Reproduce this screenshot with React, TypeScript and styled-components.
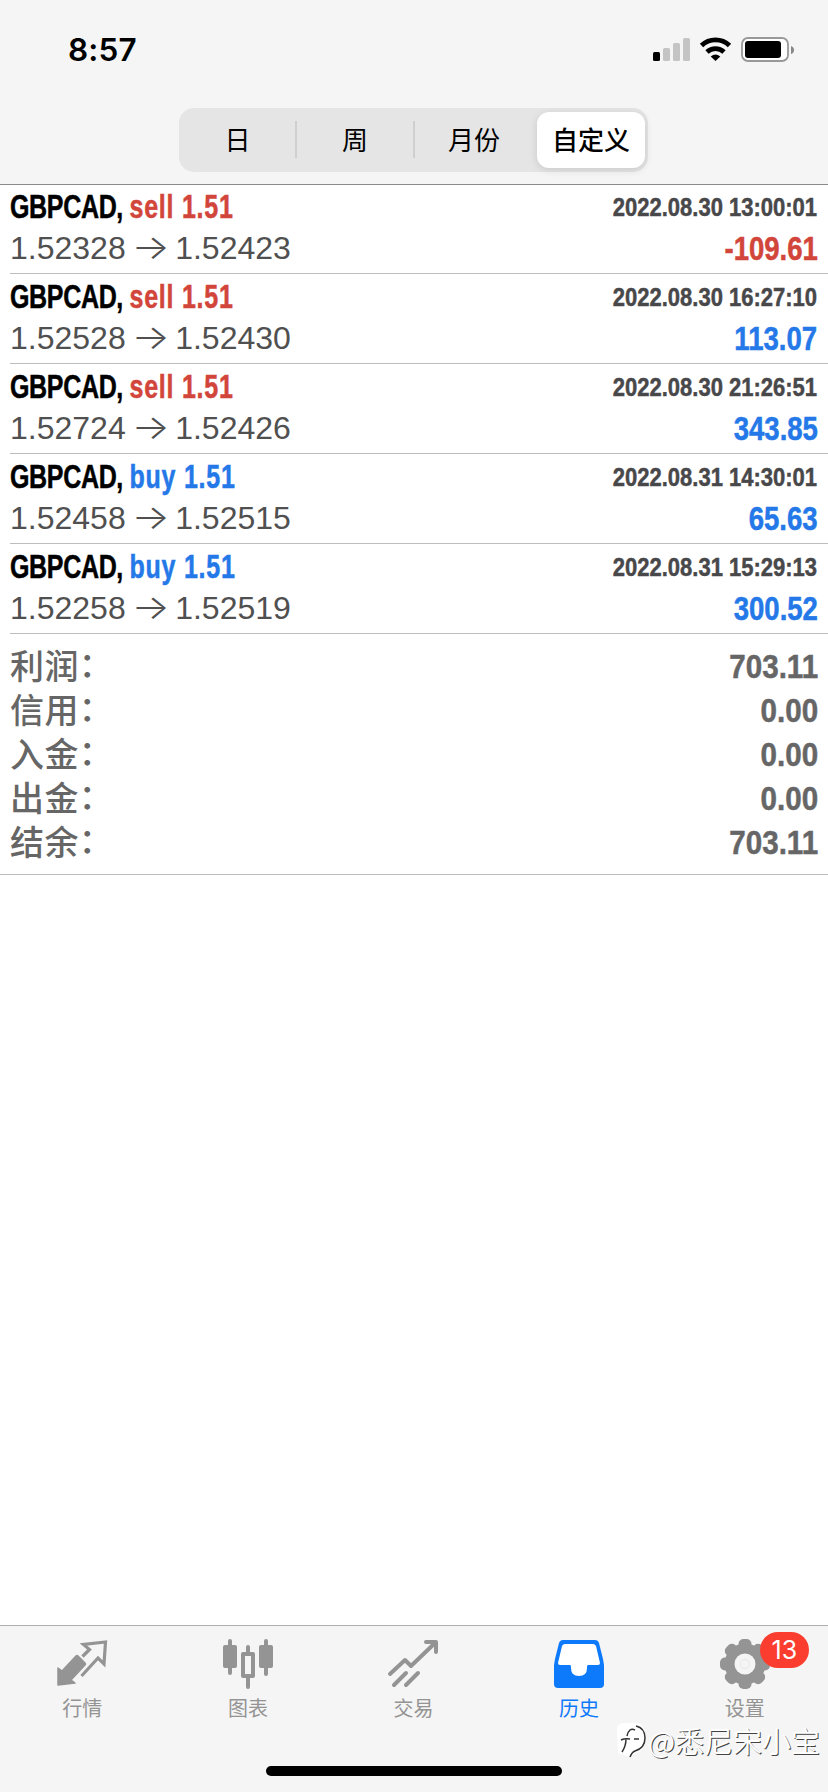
import React from 'react';
import styled, { createGlobalStyle } from 'styled-components';

const RED = '#d2453a';
const BLUE = '#2478e8';

const GlobalStyle = createGlobalStyle`
  * { box-sizing: border-box; }
  html, body { margin: 0; padding: 0; background: #fff; }
  body { font-family: 'Liberation Sans', 'Noto Sans CJK SC', sans-serif; }
`;

const Screen = styled.div`
  position: relative;
  display: flex;
  flex-direction: column;
  width: 828px;
  height: 1792px;
  overflow: hidden;
  background: #fff;
`;

const Header = styled.header`
  height: 185px;
  flex: none;
  background: #f5f5f5;
  border-bottom: 1px solid #8a8a8a;
`;

const StatusBar = styled.div`
  display: flex;
  justify-content: space-between;
  height: 108px;
  padding: 31px 33px 0 68px;
`;

const Clock = styled.div`
  font: 600 31.5px/38px Inter, sans-serif;
  letter-spacing: 0.2px;
  color: #000;
`;

const StatusIcons = styled.svg`
  width: 142px;
  height: 30px;
  margin-top: 4px;
`;

const Segments = styled.div`
  display: flex;
  align-items: stretch;
  width: 469px;
  height: 64px;
  margin-left: 179px;
  padding: 4px 3px 4px 0;
  border-radius: 15px;
  background: #e5e5e5;
`;

const Segment = styled.button<{ $w: number; $active?: boolean; $divider?: boolean }>`
  position: relative;
  width: ${(p) => p.$w}px;
  flex: none;
  margin: 0 0 0 ${(p) => (p.$active ? 3 : 0)}px;
  padding: 0 0 3px;
  border: 0;
  border-radius: 12px;
  background: ${(p) => (p.$active ? '#fff' : 'transparent')};
  box-shadow: ${(p) => (p.$active ? '0 2px 8px rgba(0,0,0,.12)' : 'none')};
  font: ${(p) => (p.$active ? 500 : 400)} 26px/53px 'Noto Sans CJK SC', sans-serif;
  color: #000;
  &::after {
    content: '';
    display: ${(p) => (p.$divider ? 'block' : 'none')};
    position: absolute;
    right: -1px;
    top: 9px;
    width: 2px;
    height: 37px;
    background: #cfcfcf;
  }
`;

const Deals = styled.main`
  margin-top: -1px;
`;

const Deal = styled.article`
  display: grid;
  grid-template-columns: 1fr auto;
  grid-template-rows: 46px 43px;
  height: 90px;
  margin-left: 10px;
  padding-right: 10.5px;
  border-bottom: 1px solid #bdbdbd;
`;

const Condensed = styled.div<{ $size: number; $scale: number; $color: string; $right?: boolean; $line: number }>`
  justify-self: ${(p) => (p.$right ? 'end' : 'start')};
  font-weight: 700;
  font-size: ${(p) => p.$size}px;
  line-height: ${(p) => p.$line}px;
  color: ${(p) => p.$color};
  white-space: pre;
  transform: scaleX(${(p) => p.$scale});
  transform-origin: ${(p) => (p.$right ? 'right' : 'left')} center;
  -webkit-text-stroke: 0.5px currentColor;
`;

const SymbolName = styled.span`
  letter-spacing: -0.45px;
`;

const Side = styled.span<{ $color: string }>`
  margin-left: -0.5px;
  letter-spacing: 0.95px;
  color: ${(p) => p.$color};
`;

const Prices = styled.div`
  display: flex;
  font-size: 32px;
  line-height: 36px;
  color: #505050;
`;

const Arrow = styled.span`
  width: 49.5px;
  text-align: center;
  font: 300 33px/35px Inter, sans-serif;
  transform: scaleX(1.22);
`;

const Summary = styled.section`
  height: 241px;
  padding: 10px 10px 0;
  border-bottom: 1px solid #bdbdbd;
`;

const SummaryRow = styled.div`
  display: flex;
  justify-content: space-between;
  height: 44px;
`;

const SummaryLabel = styled.div`
  display: flex;
  font: 500 34px/42px 'Noto Sans CJK SC', sans-serif;
  letter-spacing: 0.4px;
  color: #666;
`;

const Colon = styled.span`
  transform: translate(0, -2.5px);
`;

const TabBar = styled.nav`
  display: flex;
  height: 167px;
  margin-top: auto;
  border-top: 1px solid #b0b0b0;
  background: #f5f5f5;
`;

const Tab = styled.div<{ $active?: boolean }>`
  position: relative;
  display: flex;
  flex: 1;
  flex-direction: column;
  align-items: center;
  padding: 13px 1px 0 0;
  color: ${(p) => (p.$active ? '#0d79fb' : '#949494')};
`;

const TabIcon = styled.svg`
  width: 52px;
  height: 52px;
`;

const TabLabel = styled.span`
  margin-top: 3px;
  font: 400 20px/28px 'Noto Sans CJK SC', sans-serif;
`;

const Badge = styled.span`
  position: absolute;
  left: 97.5px;
  top: 6px;
  width: 49px;
  height: 36px;
  border-radius: 18px;
  background: #fb3d30;
  color: #fff;
  font: 400 25px/36px Inter, sans-serif;
  text-align: center;
`;

const HomeIndicator = styled.div`
  position: absolute;
  left: 266px;
  bottom: 16px;
  width: 296px;
  height: 10px;
  border-radius: 5px;
  background: #000;
`;

const Watermark = styled.div`
  position: absolute;
  left: 614px;
  top: 1720px;
  display: flex;
  align-items: center;
  font: 350 29px/40px 'Noto Sans CJK SC', sans-serif;
  color: #fff;
  white-space: nowrap;
  text-shadow: 1px 1px 0.5px #444;
`;

const WatermarkLogo = styled.svg`
  width: 34px;
  height: 38px;
`;

const deals = [
  { side: 'sell', open: '1.52328', close: '1.52423', time: '2022.08.30 13:00:01', profit: '-109.61' },
  { side: 'sell', open: '1.52528', close: '1.52430', time: '2022.08.30 16:27:10', profit: '113.07' },
  { side: 'sell', open: '1.52724', close: '1.52426', time: '2022.08.30 21:26:51', profit: '343.85' },
  { side: 'buy', open: '1.52458', close: '1.52515', time: '2022.08.31 14:30:01', profit: '65.63' },
  { side: 'buy', open: '1.52258', close: '1.52519', time: '2022.08.31 15:29:13', profit: '300.52' },
];

const totals = [
  ['利润', '703.11'],
  ['信用', '0.00'],
  ['入金', '0.00'],
  ['出金', '0.00'],
  ['结余', '703.11'],
];

const QuotesIcon = () => (
  <TabIcon viewBox="0 0 52 52" fill="none">
    <path
      d="M2 29l4 3 14-15q1-1 2 0l7 7q1 1 0 2L15 41l4 3-17 2z"
      fill="currentColor"
      stroke="currentColor"
      strokeWidth="1.5"
      strokeLinejoin="round"
    />
    <path d="M26.5 17.5l7-7-6-5 22-2.5-1.5 22-6-6-16.5 18" stroke="currentColor" strokeWidth="3.2" />
  </TabIcon>
);

const ChartsIcon = () => (
  <TabIcon viewBox="0 0 52 52" fill="none" stroke="currentColor">
    <path d="M8 2v32M44 2v33M26 8v6M26 38v10" strokeWidth="4" strokeLinecap="round" />
    <rect x="1" y="6" width="14" height="23" rx="2" fill="currentColor" stroke="none" />
    <rect x="37" y="6" width="14" height="23" rx="2" fill="currentColor" stroke="none" />
    <rect x="21" y="15" width="10" height="22" strokeWidth="4" strokeLinejoin="round" />
  </TabIcon>
);

const TradeIcon = () => (
  <TabIcon viewBox="0 0 52 52" fill="none" stroke="currentColor" strokeWidth="4" strokeLinecap="round" strokeLinejoin="round">
    <path d="M3 35l15-14 6 6L48 4M39 3h10v10M7 46l12-12M19 46l12-12" />
  </TabIcon>
);

const HistoryIcon = () => (
  <TabIcon viewBox="0 0 52 52">
    <path
      d="M10 1h32q3 0 4 3l4 16 1 6v19q0 4-4 4H5q-4 0-4-4V26l1-6L6 4q1-3 4-3z"
      fill="currentColor"
    />
    <path d="M12 5h28q2 0 3 2l4 17q0 2-2 2H35q-1 0-1 2v1q0 8-8 8t-8-8v-1q0-2-1-2H7q-2 0-2-2L9 7q1-2 3-2z" fill="#fff" />
  </TabIcon>
);

const SettingsIcon = () => (
  <TabIcon viewBox="0 0 52 52">
    {[0, 45, 90, 135, 180, 225, 270, 315].map((a) => (
      <rect key={a} x="19.5" y="0" width="13" height="14" rx="5" fill="currentColor" transform={`rotate(${a} 26 25)`} />
    ))}
    <circle cx="26" cy="25" r="20.5" fill="currentColor" />
    <circle cx="26" cy="25" r="10.5" fill="#f5f5f5" />
    <circle cx="26" cy="25" r="4.5" fill="none" stroke="#ebebeb" strokeWidth="1.5" />
  </TabIcon>
);

const tabs = [
  { label: '行情', Icon: QuotesIcon },
  { label: '图表', Icon: ChartsIcon },
  { label: '交易', Icon: TradeIcon },
  { label: '历史', Icon: HistoryIcon, active: true },
  { label: '设置', Icon: SettingsIcon, badge: '13' },
];

export default function App() {
  return (
    <Screen>
      <GlobalStyle />
      <Header>
        <StatusBar>
          <Clock>8:57</Clock>
          <StatusIcons viewBox="0 0 142 30">
            <rect x="0" y="17" width="7" height="9" rx="1.5" />
            <g fill="#c4c4c4">
              <rect x="10" y="13" width="7" height="13" rx="1.5" />
              <rect x="20" y="8" width="7" height="18" rx="1.5" />
              <rect x="30" y="3" width="7" height="23" rx="1.5" />
            </g>
            <g fill="none" stroke="#000" strokeWidth="4.8">
              <path d="M48.5 10.5a20 20 0 0 1 28 0" />
              <path d="M54 16.9a12.5 12.5 0 0 1 17 0" />
            </g>
            <path d="M57.7 21.5q4.8-4 9.6 0l-4.8 4.5z" />
            <rect x="89" y="3" width="46" height="23" rx="6" fill="#fff" stroke="#999" strokeWidth="1.8" />
            <rect x="92" y="6" width="36" height="17" rx="3" />
            <path d="M138 11q3 1 3 4t-3 4z" fill="#888" />
          </StatusIcons>
        </StatusBar>
        <Segments>
          <Segment $w={117} $divider>日</Segment>
          <Segment $w={118} $divider>周</Segment>
          <Segment $w={120}>月份</Segment>
          <Segment $w={108} $active>自定义</Segment>
        </Segments>
      </Header>
      <Deals>
        {deals.map((d) => (
          <Deal key={d.time}>
            <Condensed $size={32.5} $line={47} $scale={0.77} $color="#000">
              <SymbolName>GBPCAD,</SymbolName> <Side $color={d.side === 'sell' ? RED : BLUE}>{d.side} 1.51</Side>
            </Condensed>
            <Condensed $size={26.5} $line={46} $scale={0.83} $color="#48484a" $right>{d.time}</Condensed>
            <Prices>
              {d.open}
              <Arrow>→</Arrow>
              {d.close}
            </Prices>
            <Condensed $size={33} $line={38} $scale={0.835} $color={d.profit[0] === '-' ? RED : BLUE} $right>
              {d.profit}
            </Condensed>
          </Deal>
        ))}
        <Summary>
          {totals.map(([label, value]) => (
            <SummaryRow key={label}>
              <SummaryLabel>
                {label}
                <Colon>：</Colon>
              </SummaryLabel>
              <Condensed $size={34} $line={44} $scale={0.87} $color="#666" $right>{value}</Condensed>
            </SummaryRow>
          ))}
        </Summary>
      </Deals>
      <TabBar>
        {tabs.map(({ label, Icon, active, badge }) => (
          <Tab key={label} $active={active}>
            <Icon />
            <TabLabel>{label}</TabLabel>
            {badge && <Badge>{badge}</Badge>}
          </Tab>
        ))}
      </TabBar>
      <HomeIndicator />
      <Watermark>
        <WatermarkLogo viewBox="0 0 34 38" fill="none">
          <path d="M3 9q0-7 7-7h11q10 0 10 12v6q0 10-9 12l-6 4-12-4z" fill="#fff" />
          <path d="M22 5q9 2 9 12t-10 13q-3 1-5 6M21 9q-6-3-8 6M7 19q4-2 9-1M12 18q0 7-4 13M20 18h5" stroke="#333" strokeWidth="1.5" />
        </WatermarkLogo>
        @悉尼宋小宝
      </Watermark>
    </Screen>
  );
}
